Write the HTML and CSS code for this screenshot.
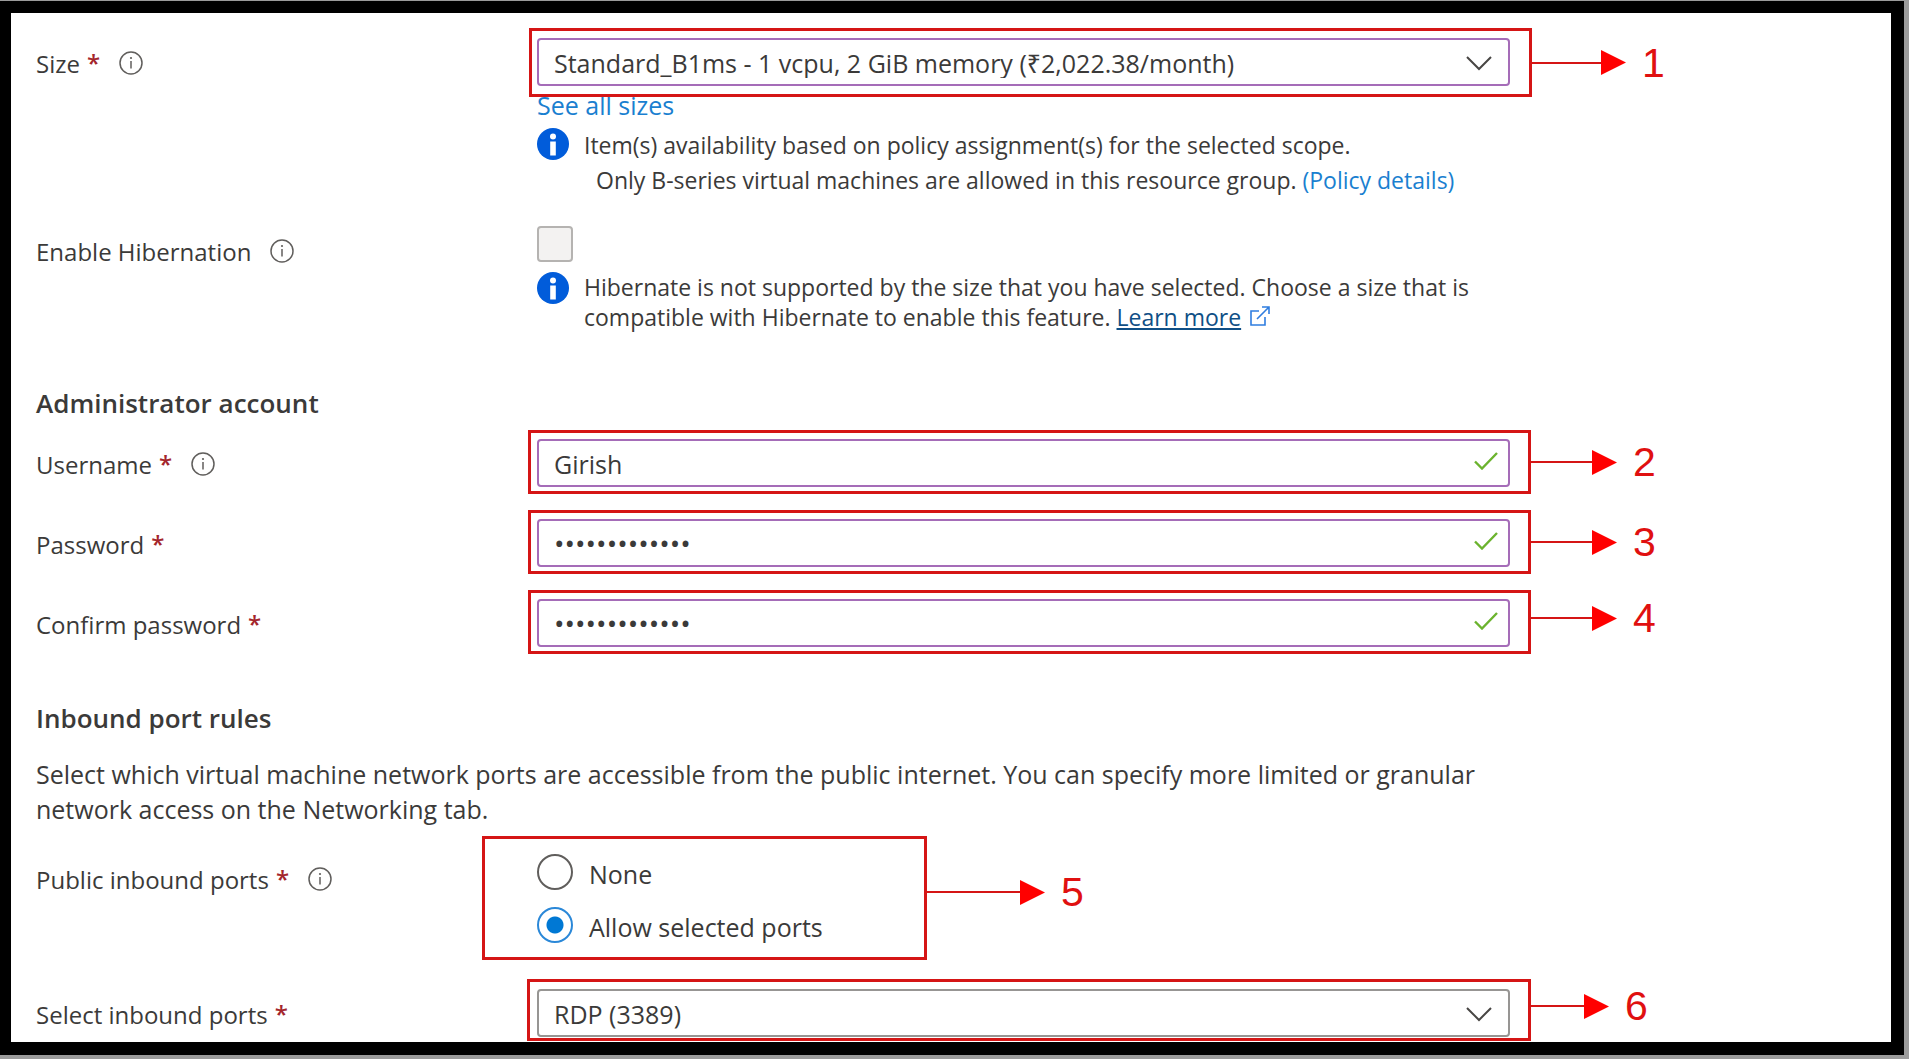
FILE: index.html
```html
<!DOCTYPE html>
<html lang="en">
<head>
<meta charset="utf-8">
<title>Create a virtual machine</title>
<link rel="stylesheet" href="styles.css">
</head>
<body>
<svg class="sprite" aria-hidden="true">
  <symbol id="info" viewBox="0 0 24 24"><circle cx="12" cy="12" r="11" fill="none" stroke="#605e5c" stroke-width="1.5"/><path d="M12 10v7.5" stroke="#605e5c" stroke-width="1.5"/><circle cx="12" cy="7" r="1.1" fill="#605e5c"/></symbol>
  <symbol id="info-solid" viewBox="0 0 32 32"><circle cx="16" cy="16" r="16" fill="#015cda"/><circle cx="16" cy="8.5" r="3" fill="#fff"/><path d="M13.2 13.5h5.6v14h-5.6z" fill="#fff"/></symbol>
  <symbol id="chevron" viewBox="0 0 26 15"><path d="M1 1l12 12L25 1" fill="none" stroke="#484644" stroke-width="2"/></symbol>
  <symbol id="check" viewBox="0 0 24 18"><path d="M1 9.5l7 7L23 1" fill="none" stroke="#6bb32e" stroke-width="2.4"/></symbol>
  <symbol id="external" viewBox="0 0 20 20"><path d="M9 5H1v14h14v-8M7 13L18.500 1.500M12 1h7v7" fill="none" stroke="#2f7de0" stroke-width="1.6"/></symbol>
  <symbol id="head" viewBox="0 0 25 25"><path d="M0 0l25 12.500L0 25z" fill="#f00"/></symbol>
</svg>
<main class="frame">
  <form class="form">
    <div class="row row-size">
      <div class="label"><label for="size">Size</label> <span class="star">*</span><svg class="info"><use href="#info"/></svg></div>
      <div class="field">
        <div class="control">
          <select id="size" class="box"><option>Standard_B1ms - 1 vcpu, 2 GiB memory (₹2,022.38/month)</option></select>
          <svg class="chevron"><use href="#chevron"/></svg>
          <div class="mark mark-tall"><span class="arrow arrow-wide"><i class="line"></i><svg class="head"><use href="#head"/></svg><b class="num">1</b></span></div>
        </div>
        <a class="sizes" href="#">See all sizes</a>
        <div class="note note-loose">
          <svg class="solid"><use href="#info-solid"/></svg>
          <div>
            <p>Item(s) availability based on policy assignment(s) for the selected scope.</p>
            <p class="indent">Only B-series virtual machines are allowed in this resource group. <a href="#">(Policy details)</a></p>
          </div>
        </div>
      </div>
    </div>
    <div class="row row-hibernate">
      <div class="label"><label for="hibernate">Enable Hibernation</label><svg class="info"><use href="#info"/></svg></div>
      <div class="field">
        <input id="hibernate" class="tick" type="checkbox" disabled>
        <div class="note">
          <svg class="solid"><use href="#info-solid"/></svg>
          <p>Hibernate is not supported by the size that you have selected. Choose a size that is compatible with Hibernate to enable this feature. <a class="learn" href="#">Learn more</a> <svg class="external"><use href="#external"/></svg></p>
        </div>
      </div>
    </div>

    <h2>Administrator account</h2>
    <div class="row row-user">
      <div class="label"><label for="user">Username</label> <span class="star">*</span><svg class="info"><use href="#info"/></svg></div>
      <div class="control">
        <input id="user" class="box" type="text" value="Girish">
        <svg class="check"><use href="#check"/></svg>
        <div class="mark"><span class="arrow"><i class="line"></i><svg class="head"><use href="#head"/></svg><b class="num">2</b></span></div>
      </div>
    </div>
    <div class="row row-secret">
      <div class="label"><label for="pass">Password</label> <span class="star">*</span></div>
      <div class="control">
        <input id="pass" class="box secret" type="password" value="Passw0rd12345">
        <svg class="check"><use href="#check"/></svg>
        <div class="mark"><span class="arrow"><i class="line"></i><svg class="head"><use href="#head"/></svg><b class="num">3</b></span></div>
      </div>
    </div>
    <div class="row row-secret">
      <div class="label"><label for="confirm">Confirm password</label> <span class="star">*</span></div>
      <div class="control">
        <input id="confirm" class="box secret" type="password" value="Passw0rd12345">
        <svg class="check"><use href="#check"/></svg>
        <div class="mark"><span class="arrow arrow-high"><i class="line"></i><svg class="head"><use href="#head"/></svg><b class="num">4</b></span></div>
      </div>
    </div>

    <h2>Inbound port rules</h2>
    <p class="intro">Select which virtual machine network ports are accessible from the public internet. You can specify more limited or granular network access on the Networking tab.</p>
    <div class="row row-public" role="radiogroup" aria-labelledby="public">
      <div class="label"><span id="public">Public inbound ports</span> <span class="star">*</span><svg class="info"><use href="#info"/></svg></div>
      <div class="radios">
        <label class="choice"><input type="radio" name="ports"><span>None</span></label>
        <label class="choice"><input type="radio" name="ports" checked><span>Allow selected ports</span></label>
        <div class="mark mark-radios"><span class="arrow arrow-long"><i class="line"></i><svg class="head"><use href="#head"/></svg><b class="num">5</b></span></div>
      </div>
    </div>
    <div class="row row-ports">
      <div class="label"><label for="ports">Select inbound ports</label> <span class="star">*</span></div>
      <div class="control">
        <select id="ports" class="box box-grey"><option>RDP (3389)</option></select>
        <svg class="chevron"><use href="#chevron"/></svg>
        <div class="mark mark-low"><span class="arrow arrow-short arrow-high"><i class="line"></i><svg class="head"><use href="#head"/></svg><b class="num">6</b></span></div>
      </div>
    </div>
  </form>
</main>
</body>
</html>
```
FILE: styles.css
```css
* { box-sizing: border-box; }
body {
  margin: 0;
  padding: 1px 5px 4px 0;
  min-height: 100vh;
  display: flex;
  background: #9b9b9b;
  color: #3b3a39;
  font: 25px/30px "Open Sans", "Noto Sans", sans-serif;
}
.sprite { display: none; }
svg { display: block; flex: none; }
p, h2 { margin: 0; }
a { color: #1a7fd0; text-decoration: none; }

.frame {
  flex: 1;
  background: #fff;
  border: solid #000;
  border-width: 12px 13px 13px 11px;
  padding: 25px 25px 0;
}
.form { max-width: 1474px; }
.row {
  display: grid;
  grid-template-columns: 501px minmax(0, 1fr);
  align-items: start;
}
.label { display: flex; padding-top: 11px; font-size: 24px; }
.star { color: #a4262c; margin-left: 7px; font-weight: 600; line-height: 28px; }
.info { width: 24px; height: 24px; margin: 2px 0 0 19px; }

.control, .radios { position: relative; }
.box {
  appearance: none;
  display: block;
  width: 100%;
  height: 48px;
  margin: 0;
  padding: 2px 56px 0 15px;
  border: 2px solid #a56cb8;
  border-radius: 4px;
  background: #fff;
  color: #3b3a39;
  font: inherit;
}
.secret { padding: 0 56px 0 15px; font-size: 28px; }
.box-grey { border-color: #979593; }
.chevron {
  position: absolute;
  top: 18px;
  right: 18px;
  width: 26px;
  height: 15px;
  pointer-events: none;
}
.check {
  position: absolute;
  top: 13px;
  right: 12px;
  width: 24px;
  height: 18px;
}

.sizes { display: block; margin-top: 4px; }
.note { display: flex; gap: 15px; margin-top: 10px; font-size: 23px; }
.note-loose { margin-top: 8px; line-height: 35px; }
.solid { width: 32px; height: 32px; }
.indent { padding-left: 12px; }
.learn { color: #0f4f86; text-decoration: underline; }
.external { display: inline-block; width: 20px; height: 20px; margin-left: 3px; }

.tick {
  appearance: none;
  display: block;
  width: 36px;
  height: 36px;
  margin: 0;
  border: 2px solid #b5b3b1;
  border-radius: 4px;
  background: #f3f2f1;
}

h2 { margin: 53px 0 18px; font-size: 26px; line-height: 36px; font-weight: 600; }
.row-hibernate { margin-top: 28px; }
.row-secret { margin-top: 32px; }
.intro { margin-top: 21px; line-height: 35px; }
.row-public { margin-top: 27px; }
.row-ports { margin-top: 47px; }

.radios { display: grid; gap: 18px; }
.choice { display: flex; gap: 16px; height: 35px; line-height: 40px; }
.choice input {
  appearance: none;
  width: 36px;
  height: 36px;
  margin: 0;
  border: 2px solid #605e5c;
  border-radius: 50%;
}
.choice input:checked {
  border-color: #2b88d8;
  background: radial-gradient(circle, #0078d4 8px, #fff 9px);
}

/* Numbered callouts drawn over the fields */
.mark {
  position: absolute;
  inset: -9px -21px -7px -9px;
  border: 3px solid #d51515;
  pointer-events: none;
}
.mark-tall { inset: -10px -22px -11px -8px; }
.mark-low { inset: -10px -21px -4px -10px; }
.mark-radios { inset: -18px auto -18px -55px; width: 445px; }
.arrow {
  position: absolute;
  left: 100%;
  top: 0;
  bottom: 0;
  display: flex;
  align-items: center;
}
.arrow-high { bottom: 8px; }
.arrow-long { bottom: 12px; }
.line { width: 64px; height: 2px; background: #d51515; }
.arrow-wide .line { width: 72px; }
.arrow-short .line { width: 56px; }
.arrow-long .line { width: 96px; }
.head { width: 25px; height: 25px; }
.num {
  margin-left: 16px;
  color: #e01010;
  font: 41px/48px "Liberation Sans", Arial, sans-serif;
}
```
